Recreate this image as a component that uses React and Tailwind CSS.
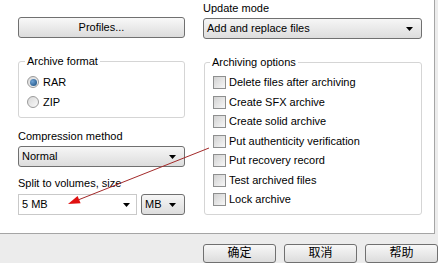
import React from "react";

function Arrow() {
  return (
    <svg width="7" height="4" viewBox="0 0 7 4" className="shrink-0">
      <path d="M0 0h7L3.5 4z" fill="#000" />
    </svg>
  );
}

function Select({ value, className = "" }) {
  return (
    <div
      className={`flex items-center justify-between h-[21px] pl-[3px] pr-[8px] rounded-[3px] border border-[#707070] bg-gradient-to-b from-[#f6f6f6] to-[#dddddd] ${className}`}
    >
      <span>{value}</span>
      <Arrow />
    </div>
  );
}

function Radio({ checked, label }) {
  return (
    <div className="flex items-center h-[20px]">
      <div className="w-[12px] h-[12px] rounded-full border border-[#9a9a9a] bg-gradient-to-br from-[#d8d8d8] to-[#fafafa] flex items-center justify-center">
        {checked && (
          <div className="w-[7px] h-[7px] rounded-full bg-[radial-gradient(circle_at_35%_35%,#6fa3d6,#164a7a)]" />
        )}
      </div>
      <span className="ml-[4px]">{label}</span>
    </div>
  );
}

function Check({ label }) {
  return (
    <div className="flex items-center h-[19.5px]">
      <div className="w-[13px] h-[13px] border border-[#8e8f8f] bg-gradient-to-br from-[#d2d2d2] to-[#f7f7f7]" />
      <span className="ml-[3px]">{label}</span>
    </div>
  );
}

export default function App() {
  const options = [
    "Delete files after archiving",
    "Create SFX archive",
    "Create solid archive",
    "Put authenticity verification",
    "Put recovery record",
    "Test archived files",
    "Lock archive",
  ];

  return (
    <div className="relative w-[438px] h-[263px] overflow-hidden bg-[#ececec] text-black text-[11px] leading-[13px] font-['Liberation_Sans',Arial,'Noto_Sans_CJK_SC',sans-serif]">
      <div className="flex w-[435px] h-[234px] pl-[18px] pt-[2px] gap-[18px] bg-white border-r border-b border-[#a5a5a5]">
        {/* left column */}
        <div className="flex flex-col w-[167px]">
          <div className="mt-[15px] h-[21px] flex items-center justify-center rounded-[3px] border border-[#707070] bg-gradient-to-b from-[#f8f8f8] to-[#dcdcdc]">
            Profiles...
          </div>

          <fieldset className="mt-[17px] border border-[#d5d5d5] rounded-[3px] pl-[8px] pt-[4px] pb-[5px]">
            <legend className="ml-[-2px] px-[2px]">Archive format</legend>
            <Radio checked label="RAR" />
            <Radio label="ZIP" />
          </fieldset>

          <div className="mt-[12px]">Compression method</div>
          <Select value="Normal" className="mt-[3px]" />

          <div className="mt-[10px]">Split to volumes, size</div>
          <div className="flex mt-[4px] gap-[4px]">
            <div className="flex items-center justify-between w-[119px] h-[21px] pl-[3px] pr-[6px] border border-[#c9c9c9] bg-white">
              <span>5 MB</span>
              <Arrow />
            </div>
            <Select value="MB" className="flex-1" />
          </div>
        </div>

        {/* right column */}
        <div className="flex flex-col w-[219px]">
          <div>Update mode</div>
          <Select value="Add and replace files" className="mt-[3px] h-[20px]" />

          <fieldset className="mt-[17px] ml-[1px] border border-[#d5d5d5] rounded-[3px] pl-[8px] pt-[4px] pb-[4px]">
            <legend className="ml-[-3px] px-[2px]">Archiving options</legend>
            {options.map((o) => (
              <Check key={o} label={o} />
            ))}
          </fieldset>
        </div>
      </div>

      {/* dialog buttons */}
      <div className="flex gap-[8px] pl-[203px] pt-[10px]">
        {["确定", "取消", "帮助"].map((b) => (
          <div
            key={b}
            className="w-[73px] h-[19px] flex items-center justify-center rounded-[3px] border border-[#707070] bg-gradient-to-b from-[#f8f8f8] to-[#dcdcdc] text-[12px]"
          >
            {b}
          </div>
        ))}
      </div>

      {/* red annotation arrow */}
      <svg className="absolute inset-0 pointer-events-none" width="438" height="263">
        <line x1="209" y1="148" x2="79" y2="199.6" stroke="#a32a2a" strokeWidth="1" />
        <polygon points="68,204 80.6,203.3 77.6,195.9" fill="#e01010" />
      </svg>
    </div>
  );
}
